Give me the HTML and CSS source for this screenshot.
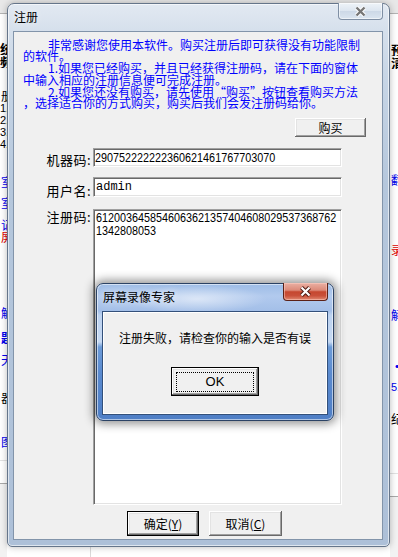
FILE: index.html
```html
<!DOCTYPE html>
<html lang="zh-CN">
<head>
<meta charset="utf-8">
<title>注册</title>
<link rel="stylesheet" href="styles.css">
</head>
<body>
<div class="desktop">
  <div class="bgapp">
    <div class="bg-left">
      <div class="bg-bar"></div>
      <div class="frag k bold big mt28"><span>统</span></div>
      <div class="frag k bold big"><span>频</span></div>
      <div class="frag k mt22"><span>册</span></div>
      <div class="frag k num"><span>1.</span></div>
      <div class="frag k num"><span>2.</span></div>
      <div class="frag k num"><span>3.</span></div>
      <div class="frag k num"><span>4.</span></div>
      <div class="frag b mt26"><span>室</span></div>
      <div class="frag b mt9"><span>室</span></div>
      <div class="frag b mt10"><span>记</span></div>
      <div class="frag r"><span>屏</span></div>
      <div class="frag b mt64"><span>解</span></div>
      <div class="frag b bold mt13"><span>题</span></div>
      <div class="frag b mt10"><span>天</span></div>
      <div class="frag k mt26"><span>器</span></div>
      <div class="frag b mt32"><span>图</span></div>
      <div class="bg-foot"></div>
      <div class="bg-rest"></div>
    </div>
    <div class="bg-mid">
      <div class="bg-bar"></div>
      <div class="bg-fill"></div>
      <div class="bg-bottom"></div>
    </div>
    <div class="bg-right">
      <div class="bg-bar"></div>
      <div class="frag k bold big mt29"><span>预</span></div>
      <div class="frag k bold big"><span>清</span></div>
      <div class="frag b mt105"><span>翻</span></div>
      <div class="frag r mt58"><span>录</span></div>
      <div class="frag b mt53"><span>解</span></div>
      <div class="frag b bold mt40"><span>·</span></div>
      <div class="frag b num mt8"><span>51</span></div>
      <div class="frag k mt20"><span>纪</span></div>
      <div class="bg-foot rfoot"></div>
      <div class="bg-rest"></div>
    </div>
  </div>

  <div class="win main">
    <div class="titlebar">
      <span class="title">注册</span>
      <span class="closebtn inactive">
        <svg width="13" height="11" viewBox="0 0 13 11"><path d="M2.5 1.5l8 8M10.5 1.5l-8 8" stroke="#ffffff" stroke-width="4.2" fill="none"/><path d="M2.5 1.5l8 8M10.5 1.5l-8 8" stroke="#767676" stroke-width="2.4" fill="none"/></svg>
      </span>
    </div>
    <div class="client">
      <div class="intro">
        <div class="ln ind">非常感谢您使用本软件。购买注册后即可获得没有功能限制</div>
        <div class="ln">的软件。</div>
        <div class="ln ind">1.如果您已经购买，并且已经获得注册码，请在下面的窗体</div>
        <div class="ln">中输入相应的注册信息便可完成注册。</div>
        <div class="ln ind">2.如果您还没有购买，请先使用<span class="fw">“</span>购买<span class="fw">”</span>按钮查看购买方法</div>
        <div class="ln">，选择适合你的方式购买，购买后我们会发注册码给你。</div>
      </div>
      <div class="buyrow"><button class="btn buy">购买</button></div>
      <div class="row r1">
        <label class="lbl">机器码:</label>
        <div class="field f1"><span class="digits">290752222222360621461767703070</span></div>
      </div>
      <div class="row r2">
        <label class="lbl">用户名:</label>
        <div class="field f2"><span class="mono">admin</span></div>
      </div>
      <div class="row r3">
        <label class="lbl">注册码:</label>
        <div class="field f3">
          <span class="digits blk">6120036458546063621357404608029537368762</span>
          <span class="digits blk">1342808053</span>
        </div>
      </div>
      <div class="actions">
        <button class="btn default bok">确定(<u>Y</u>)</button>
        <button class="btn bcancel">取消(<u>C</u>)</button>
      </div>
    </div>
  </div>

  <div class="win msgbox">
    <div class="titlebar">
      <span class="title">屏幕录像专家</span>
      <span class="closebtn active">
        <svg width="13" height="11" viewBox="0 0 13 11"><path d="M2.5 1.5l8 8M10.5 1.5l-8 8" stroke="#4a1810" stroke-width="4" fill="none"/><path d="M2.5 1.5l8 8M10.5 1.5l-8 8" stroke="#ffffff" stroke-width="2.2" fill="none"/></svg>
      </span>
    </div>
    <div class="client dlg-client">
      <p class="msg">注册失败，请检查你的输入是否有误</p>
      <button class="btn default ok"><span class="focus">OK</span></button>
    </div>
  </div>
</div>
</body>
</html>
```
FILE: styles.css
```css
* { box-sizing: border-box; }
html, body { margin: 0; padding: 0; }
body {
  width: 398px;
  height: 557px;
  overflow: hidden;
  background: #ffffff;
  font-family: "Noto Sans CJK SC", "Noto Sans", sans-serif;
}
.desktop { position: relative; width: 398px; height: 557px; overflow: hidden; }

/* background application slivers */
.bgapp { display: flex; height: 557px; }
.bg-left { width: 7px; flex: none; overflow: hidden; display: flex; flex-direction: column; }
.bg-mid { flex: 1; display: flex; flex-direction: column; }
.bg-right { width: 8px; flex: none; overflow: hidden; display: flex; flex-direction: column; }
.bg-bar { height: 14px; flex: none; background: #e8e8e8; border-bottom: 1px solid #b4b4b4; }
.bg-fill { flex: 1; }
.bg-bottom { height: 10px; flex: none; margin-left: 83px; border-left: 1px solid #dadada; }
.bg-foot { height: 24px; flex: none; margin-top: 12px; border-top: 1px solid #e2e2e2; border-bottom: 1px solid #a9a9a9; }
.bg-rest { flex: 1; background: #f2f2f2; }
.frag {
  height: 12px; flex: none; display: flex; align-items: center; overflow: hidden;
  font-size: 12px; line-height: 12px; white-space: nowrap;
}
.bg-left .frag { justify-content: flex-end; }
.bg-left .frag span { margin-right: -6px; }
.bg-left .frag.num { justify-content: flex-start; }
.bg-left .frag.num span { margin-right: 0; }
.bg-right .frag span { margin-left: 1px; }
.frag.big { height: 13px; font-size: 13px; line-height: 13px; }
.num { font-family: "Liberation Sans", sans-serif; font-size: 11px; }
.k { color: #000000; }
.b { color: #0000ee; }
.r { color: #e00000; }
.bold { font-weight: 700; }
.mt8 { margin-top: 8px; }
.mt9 { margin-top: 9px; }
.mt10 { margin-top: 10px; }
.mt13 { margin-top: 13px; }
.mt20 { margin-top: 20px; }
.mt22 { margin-top: 22px; }
.mt26 { margin-top: 26px; }
.mt28 { margin-top: 28px; }
.mt29 { margin-top: 29px; }
.mt32 { margin-top: 32px; }
.mt40 { margin-top: 40px; }
.mt53 { margin-top: 53px; }
.mt58 { margin-top: 58px; }
.mt64 { margin-top: 64px; }
.mt105 { margin-top: 105px; }
.rfoot { margin-top: 48px; }

/* windows */
.win { position: absolute; display: flex; flex-direction: column; border: 1px solid; }
.main {
  left: 7px; top: 3px; width: 383px; height: 544px;
  padding: 0 6px 6px 5px;
  border-color: #65758a;
  border-radius: 7px 7px 5px 5px;
  background: linear-gradient(180deg, #e2e9f2 0, #d6e0ec 26px, #c8d6e6 70px, #b5c7dc 180px, #adc0d8 100%);
  box-shadow: 0 0 7px rgba(0, 0, 0, 0.28), inset 0 0 0 1px rgba(255, 255, 255, 0.6);
}
.titlebar { height: 27px; flex: none; display: flex; align-items: flex-start; }
.title {
  flex: 1; margin: 6px 0 0 1px;
  font-size: 12px; line-height: 14px; color: #000000; white-space: nowrap;
  text-shadow: 0 0 6px rgba(255, 255, 255, 0.9);
}
.closebtn {
  width: 45px; height: 17px; margin-top: -1px; flex: none;
  border: 1px solid #7f8fa4; border-top: none;
  border-radius: 0 0 4px 4px;
  display: flex; align-items: center; justify-content: center;
}
.closebtn svg { display: block; }
.closebtn.inactive {
  background: linear-gradient(180deg, #eef3f8 0, #dde6f0 48%, #cdd9e7 52%, #dbe5f0 100%);
  box-shadow: inset 0 0 0 1px rgba(255, 255, 255, 0.55);
}
.closebtn.active {
  height: 18px;
  border-color: #5b2117;
  background: linear-gradient(180deg, #eab0a4 0, #dc8a79 42%, #c6472f 52%, #c9503a 75%, #e18a72 100%);
  box-shadow: inset 0 0 0 1px rgba(255, 210, 200, 0.5);
}
.client {
  flex: 1; display: flex; flex-direction: column;
  border: 1px solid #8294aa;
  background: #f0f0f0;
}

/* intro text */
.intro {
  height: 86px; flex: none;
  padding: 6.5px 0 0 9px;
  color: #0000ff; font-size: 12px; line-height: 11.8px;
}
.ln { height: 11.8px; white-space: nowrap; }
.ind { padding-left: 25px; }
.fw { font-feature-settings: "fwid" 1; }

/* buttons */
.btn {
  margin: 0; padding: 0; border: 0;
  font-family: "Noto Sans CJK SC", sans-serif; font-size: 12px; line-height: 14px; color: #000000;
  background: #f0f0f0;
  box-shadow: inset -1px -1px 0 #696969, inset 1px 1px 0 #ffffff, inset -2px -2px 0 #a0a0a0, inset 2px 2px 0 #e3e3e3;
  display: flex; align-items: center; justify-content: center;
}
.btn.default { border: 1px solid #000000; }
.buyrow { flex: none; display: flex; justify-content: flex-end; padding-right: 16px; }
.buy { width: 71px; height: 19px; }

/* form */
.row { flex: none; display: flex; }
.r1 { margin-top: 11px; height: 19px; }
.r2 { margin-top: 10px; height: 20px; }
.r3 { margin-top: 12px; height: 296px; }
.lbl {
  width: 79px; flex: none; padding-right: 2px; text-align: right;
  font-size: 13px; line-height: 13px; letter-spacing: 0.5px; color: #000000; white-space: nowrap;
}
.r1 .lbl { padding-top: 5px; }
.r2 .lbl { padding-top: 7px; }
.r3 .lbl { padding-top: 1px; }
.field {
  width: 249px; flex: none; background: #ffffff; overflow: hidden;
  border-top: 1px solid #a0a0a0; border-left: 1px solid #a0a0a0;
  border-bottom: 1px solid #ffffff; border-right: 1px solid #ffffff;
  box-shadow: inset 1px 1px 0 #696969, inset -1px -1px 0 #e3e3e3;
}
.digits {
  display: inline-block; white-space: nowrap;
  font-family: "Liberation Sans", sans-serif; font-size: 13.5px; line-height: 13px; color: #000000;
  transform: scaleX(0.8); transform-origin: 0 50%;
}
.digits.blk { display: block; width: max-content; }
.f1 { display: flex; align-items: center; padding-left: 1px; }
.f2 { display: flex; align-items: center; padding-left: 2px; }
.mono { font-family: "Liberation Mono", monospace; font-size: 12px; line-height: 14px; color: #000000; }
.f3 { padding: 1px 0 0 2px; }

.actions { flex: none; display: flex; gap: 10px; margin-top: 6px; padding-left: 113px; }
.actions .btn { height: 25px; }
.bok { width: 72px; }
.bcancel { width: 73px; }

/* message box */
.msgbox {
  left: 96px; top: 283px; width: 238px; height: 138px;
  padding: 0 5px 5px 5px;
  border-color: #2b4264;
  border-radius: 7px;
  background:
    radial-gradient(ellipse 70px 14px at 100px 15px, rgba(255, 255, 255, 0.55), rgba(255, 255, 255, 0)),
    linear-gradient(180deg, #9dbce6 0, #b2caee 12px, #a3bfe8 27px, #bcd2f0 31px, #c6d9f2 58px, #6c9bd8 63px, #5a8acf 90px, #4f7fc6 100%);
  box-shadow: 0 0 10px 3px rgba(0, 0, 0, 0.42), inset 0 0 0 1px rgba(255, 255, 255, 0.55);
}
.msgbox .title { text-shadow: 0 0 8px rgba(255, 255, 255, 0.95); }
.dlg-client {
  align-items: center;
  border-color: #33507a;
  box-shadow: inset 0 0 0 1px #ffffff;
}
.msg { margin: 18px 0 0; font-size: 12px; line-height: 16px; color: #000000; white-space: nowrap; }
.ok {
  width: 88px; height: 29px; margin-top: 21px;
  padding: 4px 4px 3px 4px; align-items: stretch;
}
.focus {
  flex: 1; display: flex; align-items: center; justify-content: center;
  border: 1px dotted #000000;
  font-family: "Liberation Sans", sans-serif; font-size: 13px; line-height: 14px;
}
```
